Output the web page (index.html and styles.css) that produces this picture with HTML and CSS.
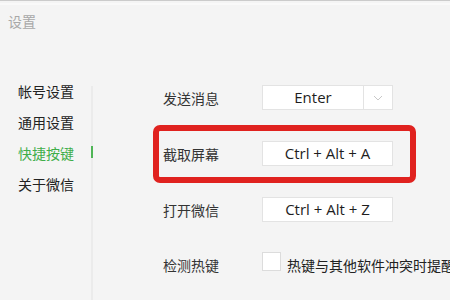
FILE: index.html
```html
<!DOCTYPE html>
<html lang="zh-CN">

<head>
    <meta charset="UTF-8">
    <meta name="viewport" content="width=device-width, initial-scale=1.0">
    <title>设置</title>
    <link rel="stylesheet" href="styles.css">
</head>

<body>
    <div class="win">
        <div class="title">设置</div>
        <div class="main">
            <div class="side">
                <div class="nav">帐号设置</div>
                <div class="nav">通用设置</div>
                <div class="nav active">快捷按键</div>
                <div class="nav">关于微信</div>
            </div>
            <div class="divider">
                <div class="mark"></div>
            </div>
            <div class="content">
                <div class="row">
                    <div class="label">发送消息</div>
                    <div class="key select">
                        <span class="val">Enter</span>
                        <span class="arrow">
                            <svg width="10" height="6" viewBox="0 0 10 6">
                                <path d="M1 1 L5 5 L9 1" fill="none" stroke="#c8c8c8" stroke-width="1" />
                            </svg>
                        </span>
                    </div>
                </div>
                <div class="row mark-row">
                    <div class="label">截取屏幕</div>
                    <div class="key">Ctrl + Alt + A</div>
                </div>
                <div class="row">
                    <div class="label">打开微信</div>
                    <div class="key">Ctrl + Alt + Z</div>
                </div>
                <div class="row check-row">
                    <div class="label">检测热键</div>
                    <div class="check"></div>
                    <div class="check-text">热键与其他软件冲突时提醒</div>
                </div>
            </div>
        </div>
    </div>
</body>

</html>
```

FILE: styles.css
```css
html,
body {
    margin: 0;
    padding: 0;
}

body {
    width: 450px;
    height: 300px;
    overflow: hidden;
    background-color: #f4f4f4;
    font-family: "Noto Sans", "Noto Sans CJK SC", sans-serif;
    font-size: 14px;
    color: #222;
}

.win {
    height: 300px;
    border-top: 1px solid #cbcbcb;
    box-sizing: border-box;
}

.title {
    height: 77px;
    padding-left: 8px;
    padding-top: 7px;
    box-sizing: border-box;
    line-height: 20px;
    color: #a8a8a8;
    border-top: 2px solid #f9f9f9;
    margin-top: 2px;
    margin-bottom: -4px;
}

.main {
    display: flex;
    height: 224px;
}

.side {
    width: 91px;
    flex-shrink: 0;
    padding-left: 18px;
    box-sizing: border-box;
}

.nav {
    height: 31px;
    line-height: 31px;
    white-space: nowrap;
}

.nav.active {
    color: #3fae4a;
}

.divider {
    width: 2px;
    flex-shrink: 0;
    margin-top: 10px;
    background-color: #ebebeb;
}

.mark {
    margin-top: 60px;
    height: 12px;
    background-color: #4fb556;
}

.content {
    flex: 1;
    min-width: 0;
    padding-left: 70px;
    padding-top: 9px;
    display: flex;
    flex-direction: column;
    gap: 31px;
}

.row {
    display: flex;
    align-items: center;
    height: 25px;
    position: relative;
    white-space: nowrap;
}

.label {
    width: 99px;
    flex-shrink: 0;
    color: #333;
}

.key {
    width: 131px;
    height: 25px;
    flex-shrink: 0;
    box-sizing: border-box;
    border: 1px solid #e3e3e3;
    background-color: #fff;
    text-align: center;
    line-height: 23px;
    color: #1e1e1e;
    font-family: "Open Sans", "Noto Sans CJK SC", sans-serif;
    font-size: 15px;
}

.select {
    display: flex;
}

.select .val {
    flex: 1;
    border-right: 1px solid #e3e3e3;
}

.select .arrow {
    width: 28px;
    display: flex;
    align-items: center;
    justify-content: center;
}

.mark-row::before {
    content: "";
    position: absolute;
    left: -10px;
    top: -16px;
    width: 263px;
    height: 58px;
    box-sizing: border-box;
    border: 6px solid #e0221f;
    border-radius: 7px;
}

.check-row {
    align-items: flex-start;
}

.check-row .label {
    line-height: 25px;
}

.check {
    width: 19px;
    height: 19px;
    flex-shrink: 0;
    margin-top: -1px;
    box-sizing: border-box;
    border: 1px solid #dcdcdc;
    background-color: #fff;
}

.check-text {
    margin-left: 6px;
    line-height: 25px;
    color: #222;
}
```
